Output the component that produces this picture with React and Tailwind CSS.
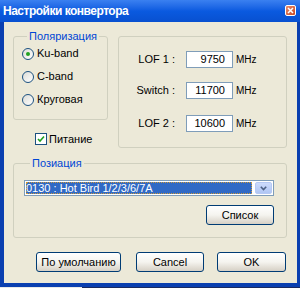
import React from 'react';

const font = { fontFamily: '"Liberation Sans", "DejaVu Sans", sans-serif' };

function Radio({ checked, label }) {
  return (
    <label className="flex items-center gap-[3px] h-[13px]">
      <span className="w-[12px] h-[12px] rounded-full border border-[#1c5180] bg-gradient-to-br from-[#dcdcd6] to-white flex items-center justify-center shrink-0">
        {checked && <span className="w-[4px] h-[4px] rounded-full bg-[#21a121]" />}
      </span>
      <span className="text-[11px] text-black leading-none">{label}</span>
    </label>
  );
}

function Field({ label, value }) {
  return (
    <div className="flex items-center">
      <span className="w-[56px] text-right text-[11px] text-black">{label}</span>
      <span className="ml-[11px] w-[47px] h-[17px] border border-[#7f9db9] bg-white text-[11px] text-black text-right pr-[7px] leading-[15px]">
        {value}
      </span>
      <span className="ml-[3px] text-[10px] text-black">MHz</span>
    </div>
  );
}

function Button({ children, className }) {
  return (
    <button className={`h-[20px] rounded-[3px] border border-[#003c74] bg-gradient-to-b from-white via-[#f5f4ef] to-[#d6d0c5] text-[11px] text-black leading-none ${className}`}>
      {children}
    </button>
  );
}

export default function App() {
  return (
    <div className="w-[300px] h-[288px] flex flex-col bg-[#0a3fb0] overflow-hidden" style={font}>
      {/* Title bar */}
      <div className="h-[22px] shrink-0 flex items-center justify-between pl-[3px] pr-[4px] bg-gradient-to-b from-[#3a80f0] via-[#0a5ae0] to-[#0850d0]">
        <span className="text-white font-bold text-[12px] tracking-[-0.5px]">Настройки конвертора</span>
        <span className="w-[11px] h-[11px] rounded-[2px] border border-white bg-gradient-to-br from-[#e88a6a] to-[#c9461e] flex items-center justify-center mb-[1px]">
          <svg width="7" height="7" viewBox="0 0 7 7">
            <path d="M1 1L6 6M6 1L1 6" stroke="white" strokeWidth="1.5" />
          </svg>
        </span>
      </div>

      {/* Body */}
      <div className="flex-1 ml-[4px] mr-[3px] bg-[#ece9d8] flex flex-col pt-[8px] pl-[9px] pr-[10px]">
        <div className="flex h-[118px]">
          <div className="w-[94px] flex flex-col">
            <fieldset className="h-[90px] border border-[#d0d0bf] rounded-[3px] px-[8px] pt-[5px]">
              <legend className="ml-[5px] px-[2px] text-[11px] leading-[12px] text-[#0046d5]">Поляризация</legend>
              <div className="flex flex-col gap-[10px]">
                <Radio checked label="Ku-band" />
                <Radio label="C-band" />
                <Radio label="Круговая" />
              </div>
            </fieldset>
            <label className="mt-[13px] ml-[22px] flex items-center gap-[2px]">
              <span className="w-[12px] h-[12px] border border-[#1c5180] bg-white flex items-center justify-center">
                <svg width="8" height="8" viewBox="0 0 8 8">
                  <path d="M1 4L3 6L7 1.5" stroke="#21a121" strokeWidth="1.6" fill="none" />
                </svg>
              </span>
              <span className="text-[11px] text-black leading-none">Питание</span>
            </label>
          </div>
          <div className="ml-[11px] mt-[6px] w-[169px] h-[112px] border border-[#d0d0bf] rounded-[3px] flex flex-col pt-[14px] gap-[14px]">
            <Field label="LOF 1 :" value="9750" />
            <Field label="Switch :" value="11700" />
            <div className="mt-[2px]">
              <Field label="LOF 2 :" value="10600" />
            </div>
          </div>
        </div>

        <fieldset className="mt-[9px] h-[81px] border border-[#d0d0bf] rounded-[3px] pl-[10px] pr-[12px] pt-[11px]">
          <legend className="ml-[6px] px-[2px] text-[11px] leading-[12px] text-[#0046d5]">Позиация</legend>
          <div className="h-[16px] flex border border-[#7f9db9] bg-white">
            <div className="flex-1 m-px bg-[#316ac5] outline-1 outline-dotted outline-offset-[-1px] outline-[#ce9a3a] flex items-center">
              <span className="text-[11px] text-white leading-none">0130 : Hot Bird 1/2/3/6/7A</span>
            </div>
            <div className="w-[17px] m-px ml-[2px] rounded-[2px] bg-gradient-to-b from-[#cddbfc] to-[#b0c6f4] border border-[#b6c9f4] flex items-center justify-center">
              <svg width="7" height="5" viewBox="0 0 7 5">
                <path d="M0.8 0.8L3.5 3.6L6.2 0.8" stroke="#4d6185" strokeWidth="1.6" fill="none" />
              </svg>
            </div>
          </div>
          <div className="flex justify-end mt-[9px]">
            <Button className="w-[68px] h-[19px]">Список</Button>
          </div>
        </fieldset>

        <div className="mt-[14px] flex pl-[23px] gap-[15px]">
          <Button className="w-[85px]">По умолчанию</Button>
          <Button className="w-[68px]">Cancel</Button>
          <Button className="ml-[-2px] w-[69px]">OK</Button>
        </div>
      </div>
      <div className="h-[4px] shrink-0 bg-[#0a3fb0]" />
      <div className="h-[1px] shrink-0 flex">
        <div className="w-[82px] bg-[#e8e8e8]" />
        <div className="flex-1 bg-[#1a2a60]" />
      </div>
    </div>
  );
}
